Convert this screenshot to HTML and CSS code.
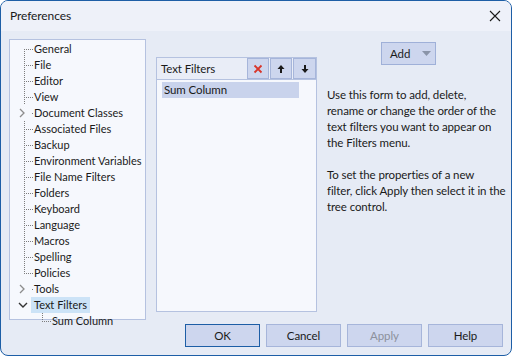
FILE: index.html
```html
<!DOCTYPE html>
<html>
<head>
<meta charset="utf-8">
<link rel="stylesheet" href="styles.css">
</head>
<body>
<div class="window">
  <div class="titlebar">
    <span class="title">Preferences</span>
    <svg class="close" width="12" height="12" viewBox="0 0 12 12"><path d="M1 1 L11 11 M11 1 L1 11" stroke="#1a1a1a" stroke-width="1.1" fill="none"/></svg>
  </div>
  <div class="content">
    <div class="tree">
      <div class="row"><span class="twig first"></span><span class="label">General</span></div>
      <div class="row"><span class="twig"></span><span class="label">File</span></div>
      <div class="row"><span class="twig"></span><span class="label">Editor</span></div>
      <div class="row"><span class="twig"></span><span class="label">View</span></div>
      <div class="row"><span class="exp"><svg width="8" height="10" viewBox="0 0 8 10"><path d="M2 1 L6 5 L2 9" stroke="#8c8c8c" stroke-width="1.3" fill="none"/></svg></span><span class="twig nov"></span><span class="label">Document Classes</span></div>
      <div class="row"><span class="twig"></span><span class="label">Associated Files</span></div>
      <div class="row"><span class="twig"></span><span class="label">Backup</span></div>
      <div class="row"><span class="twig"></span><span class="label">Environment Variables</span></div>
      <div class="row"><span class="twig"></span><span class="label">File Name Filters</span></div>
      <div class="row"><span class="twig"></span><span class="label">Folders</span></div>
      <div class="row"><span class="twig"></span><span class="label">Keyboard</span></div>
      <div class="row"><span class="twig"></span><span class="label">Language</span></div>
      <div class="row"><span class="twig"></span><span class="label">Macros</span></div>
      <div class="row"><span class="twig"></span><span class="label">Spelling</span></div>
      <div class="row"><span class="twig last"></span><span class="label">Policies</span></div>
      <div class="row"><span class="exp"><svg width="8" height="10" viewBox="0 0 8 10"><path d="M2 1 L6 5 L2 9" stroke="#8c8c8c" stroke-width="1.3" fill="none"/></svg></span><span class="twig nov"></span><span class="label">Tools</span></div>
      <div class="row"><span class="exp"><svg width="10" height="8" viewBox="0 0 10 8"><path d="M1 2 L5 6 L9 2" stroke="#333" stroke-width="1.4" fill="none"/></svg></span><span class="twig none"></span><span class="label selected">Text Filters</span></div>
      <div class="row child"><span class="twig last"></span><span class="label">Sum Column</span></div>
    </div>
    <div class="main">
      <div class="upper">
        <div class="listpanel">
          <div class="listhead">
            <span class="headtitle">Text Filters</span>
            <span class="hbtn"><svg width="10" height="10" viewBox="0 0 10 10"><path d="M1.5 1.5 L8.5 8.5 M8.5 1.5 L1.5 8.5" stroke="#d8352a" stroke-width="1.8" fill="none"/></svg></span>
            <span class="hbtn"><svg width="8" height="10" viewBox="0 0 8 10"><path d="M4 1 L7.5 5 L5 5 L5 9 L3 9 L3 5 L0.5 5 Z" fill="#1a1a1a"/></svg></span>
            <span class="hbtn"><svg width="8" height="10" viewBox="0 0 8 10"><path d="M4 9 L7.5 5 L5 5 L5 1 L3 1 L3 5 L0.5 5 Z" fill="#1a1a1a"/></svg></span>
          </div>
          <div class="listbody">
            <div class="item selected">Sum Column</div>
          </div>
        </div>
        <div class="info">
          <div class="addbtn"><span>Add</span><svg width="9" height="5" viewBox="0 0 9 5"><path d="M0 0 L9 0 L4.5 5 Z" fill="#8a94a8"/></svg></div>
          <p>Use this form to add, delete,<br>rename or change the order of the<br>text filters you want to appear on<br>the Filters menu.</p>
          <p>To set the properties of a new<br>filter, click Apply then select it in the<br>tree control.</p>
        </div>
      </div>
      <div class="buttons">
        <div class="btn default">OK</div>
        <div class="btn">Cancel</div>
        <div class="btn disabled">Apply</div>
        <div class="btn">Help</div>
      </div>
    </div>
  </div>
</div>
</body>
</html>
```
FILE: styles.css
```css
* { box-sizing: border-box; }
html, body { margin: 0; padding: 0; }
body {
  width: 512px; height: 356px;
  background: #ffffff;
  font-family: "Lato", "Noto Sans", sans-serif;
  font-size: 11.5px;
  letter-spacing: -0.1px;
  color: #1a1a1a;
}
.window {
  width: 512px; height: 356px;
  border: 1px solid #1d5ea6;
  border-radius: 8px;
  overflow: hidden;
  display: flex; flex-direction: column;
  background: #e6ebf5;
}
.titlebar {
  height: 30px;
  flex: none;
  background: #eef1f9;
  display: flex; align-items: center; justify-content: space-between;
  padding: 0 10px 0 9px;
}
.title { font-size: 12px; line-height: 16px; }
.close { display: block; }
.content {
  flex: 1;
  display: flex; align-items: flex-start;
  padding: 8px 8px 0 8px;
}
.tree {
  width: 137px; height: 281px;
  flex: none;
  background: #f6f8fd;
  border: 1px solid #b5c2e0;
  padding-top: 1px;
  font-size: 11px;
  letter-spacing: 0;
}
.row { display: flex; align-items: center; height: 16px; line-height: 16px; white-space: nowrap; }
.twig {
  width: 9px; height: 16px; flex: none;
  margin-left: 14px;
  background-image:
    repeating-linear-gradient(to bottom, #7d7d7d 0 1px, transparent 1px 2px),
    repeating-linear-gradient(to right, #7d7d7d 0 1px, transparent 1px 2px);
  background-size: 1px 16px, 8px 1px;
  background-position: 0 0, 2px 8px;
  background-repeat: no-repeat;
}
.twig.first { background-size: 1px 8px, 8px 1px; background-position: 0 8px, 2px 8px; }
.twig.last { background-size: 1px 9px, 8px 1px; background-position: 0 0, 2px 8px; }
.twig.nov {
  width: 3px; margin-left: 0;
  background-image: repeating-linear-gradient(to right, #7d7d7d 0 1px, transparent 1px 2px);
  background-size: 1px 1px; background-position: 2px 8px;
}
.twig.none { background: none; margin-left: 0; width: 3px; }
.exp { width: 12px; height: 16px; flex: none; display: flex; align-items: center; margin-left: 8px; }
.exp svg { display: block; }
.label { padding: 0 3px 0 3px; margin-left: -2px; line-height: 16px; height: 16px; }
.label.selected { background: #cce3f7; }
.row.child .twig { margin-left: 32px; background-size: 1px 9px, 8px 1px; }
.main { flex: 1; min-width: 0; display: flex; flex-direction: column; margin-left: 10px; }
.upper { display: flex; align-items: flex-start; height: 285px; }
.listpanel {
  width: 161px; height: 255px; flex: none;
  margin-top: 18px;
  border: 1px solid #b5c2e0;
  background: #f6f8fd;
  display: flex; flex-direction: column;
}
.listhead {
  height: 22px; flex: none;
  background: #e9edf7;
  border-bottom: 1px solid #b5c2e0;
  display: flex; align-items: center;
  padding: 0 0 0 4px;
}
.headtitle { flex: 1; }
.hbtn {
  width: 22px; height: 21px;
  display: flex; align-items: center; justify-content: center;
  background: #cdd6ee;
  border: 1px solid #a6b5da;
  margin-left: 1px;
}
.hbtn:last-child { width: 23px; }
.hbtn svg { display: block; }
.listbody { flex: 1; padding: 2px 17px 0 5px; }
.item { height: 16px; line-height: 16px; padding-left: 2px; }
.item.selected { background: #c9d3ec; }
.info { width: 177px; flex: none; margin-left: 10px; margin-top: 3px; }
.addbtn {
  width: 55px; height: 23px;
  margin-left: 54px;
  background: #cdd6ee;
  border: 1px solid #9fb0d8;
  display: flex; align-items: center; justify-content: space-between;
  padding: 0 4px 0 8px;
}
.info p { margin: 0; line-height: 16px; white-space: nowrap; }
.info p:first-of-type { margin-top: 22px; }
.info p + p { margin-top: 16px; }
.buttons { display: flex; justify-content: flex-end; gap: 6px; }
.btn {
  width: 75px; height: 23px;
  background: #cdd6ee;
  border: 1px solid #a6b5da;
  display: flex; align-items: center; justify-content: center;
}
.btn.default { border-color: #1d5ea6; }
.btn.disabled { color: #8c919c; }
```
